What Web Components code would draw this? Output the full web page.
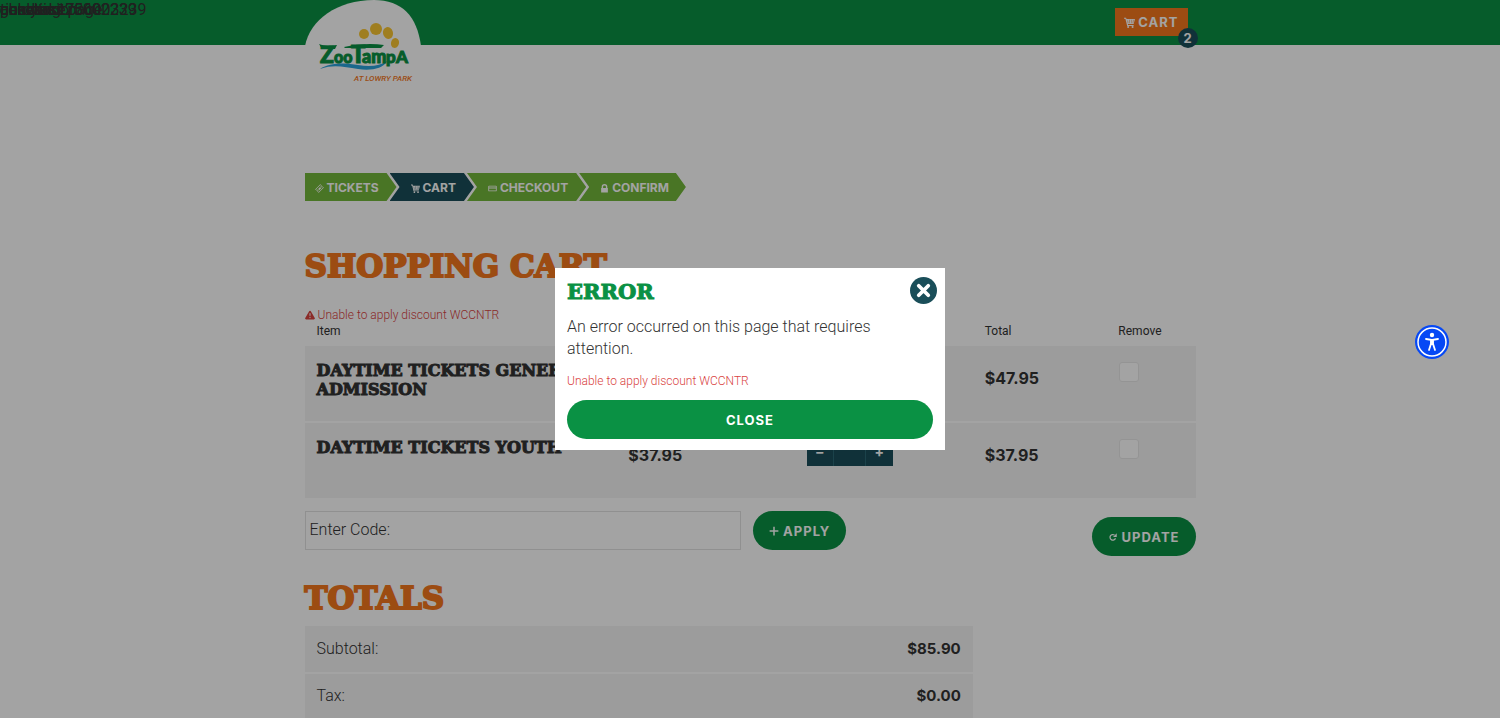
<!DOCTYPE html>
<html lang="en">
<head>
<meta charset="utf-8">
<title>Shopping Cart - ZooTampa at Lowry Park</title>
<style>
  :root {
    --green: #0a9144;
    --leaf: #73b83a;
    --teal: #1a4e59;
    --orange: #f4771d;
    --stripe: #f5f5f5;
    --ink: #333;
    --error: #d9443f;
    --body: Roboto, "Liberation Sans", sans-serif;
    --strong: Inter, "Liberation Sans", sans-serif;
    --slab: "DejaVu Serif", serif;
  }
  body {
    margin: 0;
    background: #fff;
    color: var(--ink);
    font: 300 16px/22px var(--body);
  }
  main {
    max-width: 891px;
    margin: 0 auto;
    padding-top: 128px;
  }
  h1, h2 {
    margin: 0;
    color: var(--orange);
    font: 700 31px/40px var(--slab);
    -webkit-text-stroke: 2px var(--orange);
  }
  h1 { margin-top: 45px; }
  h2 { margin: 22px 0 8px; }
</style>
</head>
<body>
<site-header count="2"></site-header>

<main>
  <step-trail>
    <step-item icon="ticket" href="#tickets">TICKETS</step-item>
    <step-item icon="cart" href="#cart" current>CART</step-item>
    <step-item icon="card" href="#checkout">CHECKOUT</step-item>
    <step-item icon="lock" href="#confirm">CONFIRM</step-item>
  </step-trail>
  <h1>SHOPPING CART</h1>
  <inline-error>Unable to apply discount WCCNTR</inline-error>
  <cart-table></cart-table>
  <discount-bar></discount-bar>
  <h2>TOTALS</h2>
  <totals-table></totals-table>
</main>

<error-dialog>
  <span slot="title">ERROR</span>
  An error occurred on this page that requires attention.
  <span slot="detail">Unable to apply discount WCCNTR</span>
</error-dialog>
<access-button></access-button>

<script>
const icons = {
  cart: '<path d="M0 1h3l.6 2H16l-2 7H5.600l.4 1.500h8V13H4.600L2 2.600H0z"/><path d="M5 5l1 4M8 4v5M11 4v5M14 4l-1 5" stroke="var(--gap, #888)" stroke-width=".6"/><circle cx="6" cy="14.500" r="1.500"/><circle cx="12.500" cy="14.500" r="1.500"/>',
  ticket: '<path d="M1 9.500 9.500 1 11 2.500a1.500 1.500 0 0 0 2.500 2.500L15 6.500 6.500 15 5 13.500A1.500 1.500 0 0 0 2.500 11z" fill="none" stroke="currentColor" stroke-width="1.500"/><path d="M5.500 9l3.500-3.500 2 2L7.500 11z"/>',
  card: '<path fill-rule="evenodd" d="M2 3h12a1.500 1.500 0 0 1 1.500 1.500v7A1.500 1.500 0 0 1 14 13H2a1.500 1.500 0 0 1-1.500-1.500v-7A1.500 1.500 0 0 1 2 3zm0 1.500V6h12V4.500zM2 8v3.500h12V8z"/>',
  lock: '<path fill-rule="evenodd" d="M3 7V5a5 5 0 0 1 10 0v2h1v8H2V7zm2.500 0h5V5a2.500 2.500 0 0 0-5 0z"/>',
  plus: '<path d="M6.800 1h2.400v5.800H15v2.400H9.200V15H6.800V9.200H1V6.800h5.800z"/>',
  reload: '<path d="M12 10a4.500 4.500 0 1 1-1.500-5" fill="none" stroke="currentColor" stroke-width="2"/><path d="M14 2v6H8z"/>',
  warning: '<path fill-rule="evenodd" d="M8 1c.8 0 1.200.5 1.600 1.200l6 10.500c.6 1.200 0 2.300-1.400 2.300H1.800C.4 15-.2 13.900.4 12.700l6-10.500C6.800 1.500 7.200 1 8 1zM7 5l.4 5h1.200L9 5zm1 6a1.100 1.100 0 1 0 0 2.200A1.100 1.100 0 0 0 8 11z"/>',
  close: '<path d="M3.500 3.500l9 9M12.500 3.500l-9 9" stroke="currentColor" stroke-width="3.500" stroke-linecap="round"/>'
};

const icon = (name, size) =>
  `<svg class="icon" width="${size}" height="${size}" viewBox="0 0 16 16" fill="currentColor" aria-hidden="true">${icons[name]}</svg>`;

customElements.define(
  'site-header',
  class extends HTMLElement {
    constructor() {
      super();
      const shadowRoot = this.attachShadow({ mode: 'open' });
      shadowRoot.innerHTML = `<style>
        :host {
          display: block;
          position: relative;
          height: 45px;
          background: var(--green);
        }
        .inner {
          display: flex;
          justify-content: space-between;
          align-items: flex-start;
          max-width: 891px;
          margin: 0 auto;
        }
        .logo svg { display: block; overflow: visible; }
        .cart {
          display: flex;
          align-items: center;
          gap: 3px;
          position: relative;
          height: 28px;
          margin: 8px 8px 0 0;
          padding: 0 9px;
          box-sizing: border-box;
          background: var(--orange);
          color: #fff;
          font: 700 13px/28px var(--strong);
          letter-spacing: 1px;
          text-decoration: none;
          --gap: var(--orange);
        }
        .count {
          position: absolute;
          right: -10px;
          bottom: -12px;
          width: 20px;
          border-radius: 50%;
          background: var(--teal);
          font-size: 13px;
          line-height: 20px;
          letter-spacing: 0;
          text-align: center;
        }
        .tags span {
          position: absolute;
          left: 0;
          top: 0;
          color: var(--ink);
          font-weight: 400;
          line-height: 20px;
          white-space: nowrap;
        }
      </style>
      <div class="tags">
        <span>general 1736003239</span>
        <span>ticketing 25002239</span>
        <span>analytics page</span>
        <span>conversion</span>
        <span>purchase</span>
        <span>checkout</span>
      </div>
      <div class="inner">
        <a class="logo" href="#home" aria-label="ZooTampa at Lowry Park">
          <svg width="116" height="90" viewBox="0 0 116 90">
            <path d="M0 46C5 20 32 0 69 0c28 0 43 16 47 46v2H0z" fill="#fff"/>
            <g fill="#f9c632">
              <ellipse cx="59" cy="34" rx="5" ry="5"/>
              <ellipse cx="71" cy="29" rx="6" ry="6"/>
              <ellipse cx="83" cy="33" rx="5" ry="6" transform="rotate(-15 83 33)"/>
              <ellipse cx="90" cy="43" rx="4" ry="5" transform="rotate(15 90 43)"/>
            </g>
            <path d="M15 69c10-7 26-6 38-4s22 1 29-4c-4 8-17 10-29 8-14-2-24-5-38 0z" fill="#2ba3dc"/>
            <text y="63" fill="#0a9144" stroke="#0a9144" stroke-width="1" font-family="Lato, sans-serif" font-weight="900"><tspan x="15" font-size="23">Z</tspan><tspan x="29" font-size="16">oo</tspan><tspan x="46" font-size="24">T</tspan><tspan x="57" font-size="18">am</tspan><tspan x="81" font-size="17">p</tspan><tspan x="91" font-size="17">A</tspan></text>
            <path d="M14 44c5 2 9 2 18 1l-2 4H17zM39 47c13-3 28-4 40-2l-3 3H40z" fill="#0a9144"/>
            <text x="49" y="81" fill="#f4771d" font-family="Roboto, sans-serif" font-size="8" font-weight="500" font-style="italic">AT LOWRY PARK</text>
          </svg>
        </a>
        <a class="cart" href="#cart">${icon('cart', 11)}CART<span class="count">${this.getAttribute('count')}</span></a>
      </div>`;
    }
  }
);

customElements.define(
  'step-trail',
  class extends HTMLElement {
    constructor() {
      super();
      const shadowRoot = this.attachShadow({ mode: 'open' });
      shadowRoot.innerHTML = `<style>
        :host { display: block; }
        nav { display: flex; }
      </style>
      <nav aria-label="Progress"><slot></slot></nav>`;
    }
  }
);

customElements.define(
  'step-item',
  class extends HTMLElement {
    constructor() {
      super();
      const shadowRoot = this.attachShadow({ mode: 'open' });
      shadowRoot.innerHTML = `<style>
        :host {
          display: block;
          margin-right: -7px;
          background: var(--leaf);
          clip-path: polygon(0 0, calc(100% - 10px) 0, 100% 50%, calc(100% - 10px) 100%, 0 100%, 10px 50%);
          --gap: var(--leaf);
        }
        :host(:first-child) {
          clip-path: polygon(0 0, calc(100% - 10px) 0, 100% 50%, calc(100% - 10px) 100%, 0 100%);
        }
        :host([current]) {
          background: var(--teal);
          --gap: var(--teal);
        }
        a {
          display: flex;
          align-items: center;
          gap: 3px;
          padding: 2px 18px 0 21px;
          color: #fff;
          font: 700 12px/26px var(--strong);
          text-decoration: none;
        }
        :host(:first-child) a { padding-left: 10px; }
        :host(:last-child) a { padding-right: 17px; }
      </style>
      <a href="${this.getAttribute('href')}">${icon(this.getAttribute('icon'), 9)}<slot></slot></a>`;
    }
  }
);

customElements.define(
  'inline-error',
  class extends HTMLElement {
    constructor() {
      super();
      const shadowRoot = this.attachShadow({ mode: 'open' });
      shadowRoot.innerHTML = `<style>
        :host {
          display: flex;
          align-items: center;
          gap: 3px;
          margin-top: 21px;
          color: var(--error);
          font-size: 12px;
          line-height: 16px;
        }
      </style>
      ${icon('warning', 10)}<span role="alert"><slot></slot></span>`;
    }
  }
);

customElements.define(
  'cart-table',
  class extends HTMLElement {
    constructor() {
      super();
      const items = [
        ['DAYTIME TICKETS GENERAL ADMISSION', '$47.95'],
        ['DAYTIME TICKETS YOUTH', '$37.95']
      ];
      const rows = items.map(([name, price]) => `
        <tr>
          <td class="name">${name}</td>
          <td class="price">${price}</td>
          <td><div class="qty">
            <button type="button" aria-label="Remove one">–</button>
            <input type="text" inputmode="numeric" aria-label="Quantity, ${name}">
            <button type="button" aria-label="Add one">+</button>
          </div></td>
          <td class="price">${price}</td>
          <td><input type="checkbox" aria-label="Remove ${name}"></td>
        </tr>`).join('');
      const shadowRoot = this.attachShadow({ mode: 'open' });
      shadowRoot.innerHTML = `<style>
        :host { display: block; }
        table {
          width: 100%;
          table-layout: fixed;
          border-collapse: collapse;
        }
        th {
          padding: 0 12px 7px;
          font-size: 12px;
          font-weight: 400;
          line-height: 16px;
          text-align: left;
        }
        td {
          height: 76px;
          padding: 0;
          box-sizing: border-box;
          background: var(--stripe);
          vertical-align: top;
        }
        tr + tr td { border-top: 2px solid #fff; }
        .name {
          padding: 15px 0 0 12px;
          font: 700 16px/19px var(--slab);
          -webkit-text-stroke: 1px var(--ink);
        }
        .price {
          padding: 21px 0 0 12px;
          font: 700 16px/22px var(--strong);
        }
        .qty {
          display: flex;
          width: 86px;
          height: 28px;
          margin: 15px 0 0 12px;
          background: var(--teal);
        }
        .qty button, .qty input {
          box-sizing: border-box;
          min-width: 0;
          margin: 0;
          padding: 0;
          border: 0;
          background: none;
          color: #fff;
          font: 700 14px/28px var(--strong);
          text-align: center;
        }
        .qty button { flex: 27; }
        .qty input {
          flex: 32;
          border: solid #2b6874;
          border-width: 0 1px;
        }
        [type=checkbox] {
          display: block;
          appearance: none;
          width: 20px;
          height: 20px;
          margin: 16px 0 0 13px;
          border: 1px solid #e8e8e8;
          border-radius: 3px;
          background: #fff;
        }
      </style>
      <table>
        <colgroup>
          <col style="width: 35%"><col style="width: 20%"><col style="width: 20%"><col style="width: 15%"><col>
        </colgroup>
        <thead>
          <tr><th>Item</th><th>Price</th><th>Qty</th><th>Total</th><th>Remove</th></tr>
        </thead>
        <tbody>${rows}</tbody>
      </table>`;
    }
  }
);

customElements.define(
  'pill-button',
  class extends HTMLElement {
    constructor() {
      super();
      const name = this.getAttribute('icon');
      const shadowRoot = this.attachShadow({ mode: 'open' });
      shadowRoot.innerHTML = `<style>
        :host { display: block; }
        button {
          display: flex;
          align-items: center;
          justify-content: center;
          gap: 4px;
          width: 100%;
          height: 39px;
          padding: 1px 16px 0;
          border: 0;
          border-radius: 20px;
          background: var(--green);
          color: #fff;
          font: 700 13px/38px var(--strong);
          letter-spacing: 1px;
        }
      </style>
      <button type="button">${name ? icon(name, 10) : ''}<slot></slot></button>`;
    }
  }
);

customElements.define(
  'discount-bar',
  class extends HTMLElement {
    constructor() {
      super();
      const shadowRoot = this.attachShadow({ mode: 'open' });
      shadowRoot.innerHTML = `<style>
        :host {
          display: flex;
          align-items: flex-start;
          gap: 12px;
          margin-top: 13px;
        }
        .field {
          display: flex;
          align-items: center;
          flex: 0 0 49%;
          height: 39px;
          box-sizing: border-box;
          padding: 0 4px 2px;
          border: 1px solid #e2e2e2;
        }
        input {
          flex: 1;
          min-width: 0;
          border: 0;
          outline: 0;
          background: none;
          font: inherit;
        }
        .update { margin: 6px 0 0 auto; }
      </style>
      <div class="field">
        <label for="code">Enter Code:</label>
        <input id="code" type="text">
      </div>
      <pill-button icon="plus">APPLY</pill-button>
      <pill-button class="update" icon="reload">UPDATE</pill-button>`;
    }
  }
);

customElements.define(
  'totals-table',
  class extends HTMLElement {
    constructor() {
      super();
      const shadowRoot = this.attachShadow({ mode: 'open' });
      shadowRoot.innerHTML = `<style>
        :host { display: block; width: 75%; }
        table { width: 100%; border-collapse: collapse; }
        th, td {
          height: 47px;
          padding: 0 12px;
          box-sizing: border-box;
          background: var(--stripe);
        }
        th { font-weight: inherit; text-align: left; }
        td { font: 700 15px/22px var(--strong); text-align: right; }
        tr + tr > * { height: 45px; border-top: 2px solid #fff; }
      </style>
      <table>
        <tr><th scope="row">Subtotal:</th><td>$85.90</td></tr>
        <tr><th scope="row">Tax:</th><td>$0.00</td></tr>
      </table>`;
    }
  }
);

customElements.define(
  'error-dialog',
  class extends HTMLElement {
    constructor() {
      super();
      const shadowRoot = this.attachShadow({ mode: 'open' });
      shadowRoot.innerHTML = `<style>
        :host {
          display: flex;
          align-items: center;
          justify-content: center;
          position: fixed;
          inset: 0;
          background: rgba(0, 0, 0, .36);
        }
        .box {
          position: relative;
          width: 26%;
          min-width: 300px;
          box-sizing: border-box;
          padding: 12px 12px 11px;
          background: #fff;
        }
        h2 {
          margin: 0;
          color: var(--green);
          font: 700 21px/24px var(--slab);
          -webkit-text-stroke: 1px var(--green);
        }
        p { margin: 12px 0 0; }
        .detail {
          margin: 13px 0 11px;
          color: var(--error);
          font-size: 12px;
          line-height: 16px;
        }
        .x {
          display: grid;
          place-items: center;
          position: absolute;
          top: 9px;
          right: 8px;
          width: 27px;
          height: 27px;
          padding: 0;
          border: 0;
          border-radius: 50%;
          background: var(--teal);
          color: #fff;
        }
      </style>
      <div class="box" role="dialog" aria-modal="true" aria-labelledby="title">
        <h2 id="title"><slot name="title"></slot></h2>
        <p><slot></slot></p>
        <p class="detail"><slot name="detail"></slot></p>
        <pill-button>CLOSE</pill-button>
        <button class="x" type="button" aria-label="Close">${icon('close', 17)}</button>
      </div>`;
    }
  }
);

customElements.define(
  'access-button',
  class extends HTMLElement {
    constructor() {
      super();
      const shadowRoot = this.attachShadow({ mode: 'open' });
      shadowRoot.innerHTML = `<style>
        :host {
          display: block;
          position: fixed;
          top: 325px;
          right: 51px;
        }
        button { display: block; padding: 0; border: 0; background: none; }
        svg { display: block; }
      </style>
      <button type="button" aria-label="Accessibility menu">
        <svg width="34" height="34" viewBox="0 0 34 34">
          <circle cx="17" cy="17" r="17" fill="#0648f5"/>
          <circle cx="17" cy="17" r="14" fill="none" stroke="#fff" stroke-width="1.500"/>
          <circle cx="17" cy="10" r="2.200" fill="#fff"/>
          <path d="M11 14l5 .8v4l-2 6.200M23 14l-5 .8v4l2 6.200" fill="none" stroke="#fff" stroke-width="1.800" stroke-linecap="round"/>
          <path d="M15.500 14h3v6h-3z" fill="#fff"/>
        </svg>
      </button>`;
    }
  }
);
</script>
</body>
</html>
